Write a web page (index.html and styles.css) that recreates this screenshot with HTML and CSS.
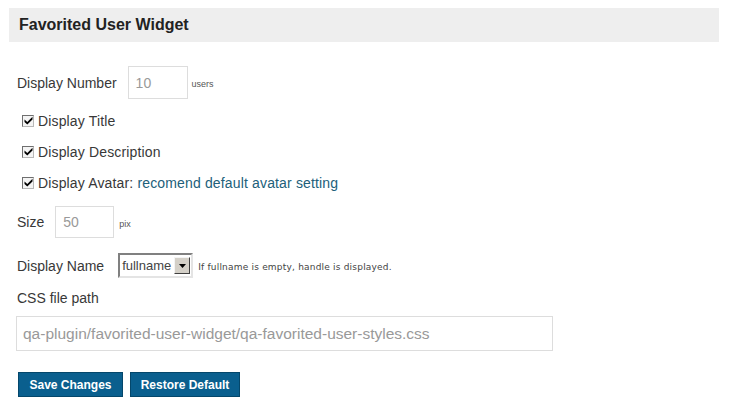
FILE: index.html
```html
<!DOCTYPE html>
<html>
<head>
<meta charset="utf-8">
<link rel="stylesheet" href="styles.css">
</head>
<body>
<div class="header">Favorited User Widget</div>
<form class="form">
  <div class="row row-number">
    <span class="label">Display Number</span>
    <span class="input input-number">10</span>
    <span class="unit">users</span>
  </div>
  <div class="check-row first-check">
    <span class="cb"><svg width="9" height="9" viewBox="0 0 9 9"><path d="M0.5 3.5 L3.3 6 L8.5 0.8 L8.5 3.6 L3.3 8.6 L0.5 6 Z" fill="#000"/></svg></span>
    <span class="cb-text">Display Title</span>
  </div>
  <div class="check-row">
    <span class="cb"><svg width="9" height="9" viewBox="0 0 9 9"><path d="M0.5 3.5 L3.3 6 L8.5 0.8 L8.5 3.6 L3.3 8.6 L0.5 6 Z" fill="#000"/></svg></span>
    <span class="cb-text">Display Description</span>
  </div>
  <div class="check-row">
    <span class="cb"><svg width="9" height="9" viewBox="0 0 9 9"><path d="M0.5 3.5 L3.3 6 L8.5 0.8 L8.5 3.6 L3.3 8.6 L0.5 6 Z" fill="#000"/></svg></span>
    <span class="cb-text">Display Avatar: <a class="link">recomend default avatar setting</a></span>
  </div>
  <div class="row row-size">
    <span class="label">Size</span>
    <span class="input input-size">50</span>
    <span class="unit unit-pix">pix</span>
  </div>
  <div class="row row-name">
    <span class="label">Display Name</span>
    <span class="select"><span class="select-text">fullname</span><span class="select-btn"><svg width="7" height="4" viewBox="0 0 7 4"><path d="M0 0 H7 L3.5 4 Z" fill="#000"/></svg></span></span>
    <span class="hint">If fullname is empty, handle is displayed.</span>
  </div>
  <div class="path-label">CSS file path</div>
  <div class="input input-path">qa-plugin/favorited-user-widget/qa-favorited-user-styles.css</div>
  <div class="buttons">
    <span class="btn btn-save">Save Changes</span>
    <span class="btn btn-restore">Restore Default</span>
  </div>
</form>
</body>
</html>
```
FILE: styles.css
```css
html, body {
  margin: 0;
  padding: 0;
  background: #fff;
}
body {
  font-family: "Liberation Sans", Arial, sans-serif;
  font-size: 14px;
  color: #383838;
}
.header {
  margin: 8px 11px 0 9px;
  height: 34px;
  line-height: 34px;
  background: #eeeeee;
  padding-left: 10px;
  font-weight: bold;
  font-size: 16px;
  color: #222;
}
.form {
  padding-left: 17px;
}
.row {
  display: flex;
  align-items: center;
}
.row-number {
  margin-top: 24px;
}
.input {
  box-sizing: border-box;
  border: 1px solid #dddddd;
  color: #999;
  background: #fff;
  display: flex;
  align-items: center;
  padding-left: 7px;
}
.input-number {
  margin-left: 11px;
  width: 60px;
  height: 33px;
}
.unit {
  font-size: 9px;
  color: #555;
  margin-left: 4px;
  padding-top: 3px;
}
.check-row {
  display: flex;
  align-items: center;
  height: 31px;
  padding-left: 5px;
}
.cb-text {
  letter-spacing: 0.15px;
}
.first-check {
  margin-top: 6px;
}
.cb {
  box-sizing: border-box;
  width: 12px;
  height: 12px;
  border: 1px solid #6f6f6f;
  border-right-color: #b8b8b8;
  border-bottom-color: #b8b8b8;
  background: #f4f4f4;
  display: flex;
  align-items: center;
  justify-content: center;
  margin-right: 4px;
}
.link {
  color: #21607a;
}
.row-size {
  margin-top: 8px;
}
.input-size {
  margin-left: 11px;
  width: 59px;
  height: 32px;
}
.unit-pix {
  margin-left: 5px;
}
.row-name {
  margin-top: 15px;
}
.select {
  box-sizing: border-box;
  margin-left: 14px;
  width: 75px;
  height: 25px;
  border: 2px solid;
  border-color: #808080 #e4e4e4 #e4e4e4 #808080;
  background: #fff;
  display: flex;
  align-items: center;
  justify-content: space-between;
  padding: 0 1px 0 2px;
}
.select-text {
  color: #444;
  font-size: 13px;
}
.select-btn {
  box-sizing: border-box;
  width: 16px;
  height: 17px;
  background: #d4d0c8;
  border: 1px solid;
  border-color: #f4f4f4 #404040 #404040 #f4f4f4;
  display: flex;
  align-items: center;
  justify-content: center;
}
.hint {
  font-family: "DejaVu Sans", Verdana, sans-serif;
  font-size: 9px;
  letter-spacing: 0.2px;
  color: #444;
  margin-left: 5px;
  padding-top: 2px;
}
.path-label {
  margin-top: 11px;
  line-height: 18px;
}
.input-path {
  margin-top: 9px;
  margin-left: -1px;
  width: 537px;
  height: 35px;
  font-size: 15.5px;
  color: #999;
  padding-left: 6px;
}
.buttons {
  display: flex;
  gap: 7px;
  margin-top: 21px;
  padding-left: 1px;
}
.btn {
  box-sizing: border-box;
  height: 25px;
  display: flex;
  align-items: center;
  justify-content: center;
  background: #0a5f8e;
  border: 1px solid #04476b;
  color: #fff;
  font-weight: bold;
  font-size: 12px;
}
.btn-save {
  width: 105px;
}
.btn-restore {
  width: 110px;
}
```
